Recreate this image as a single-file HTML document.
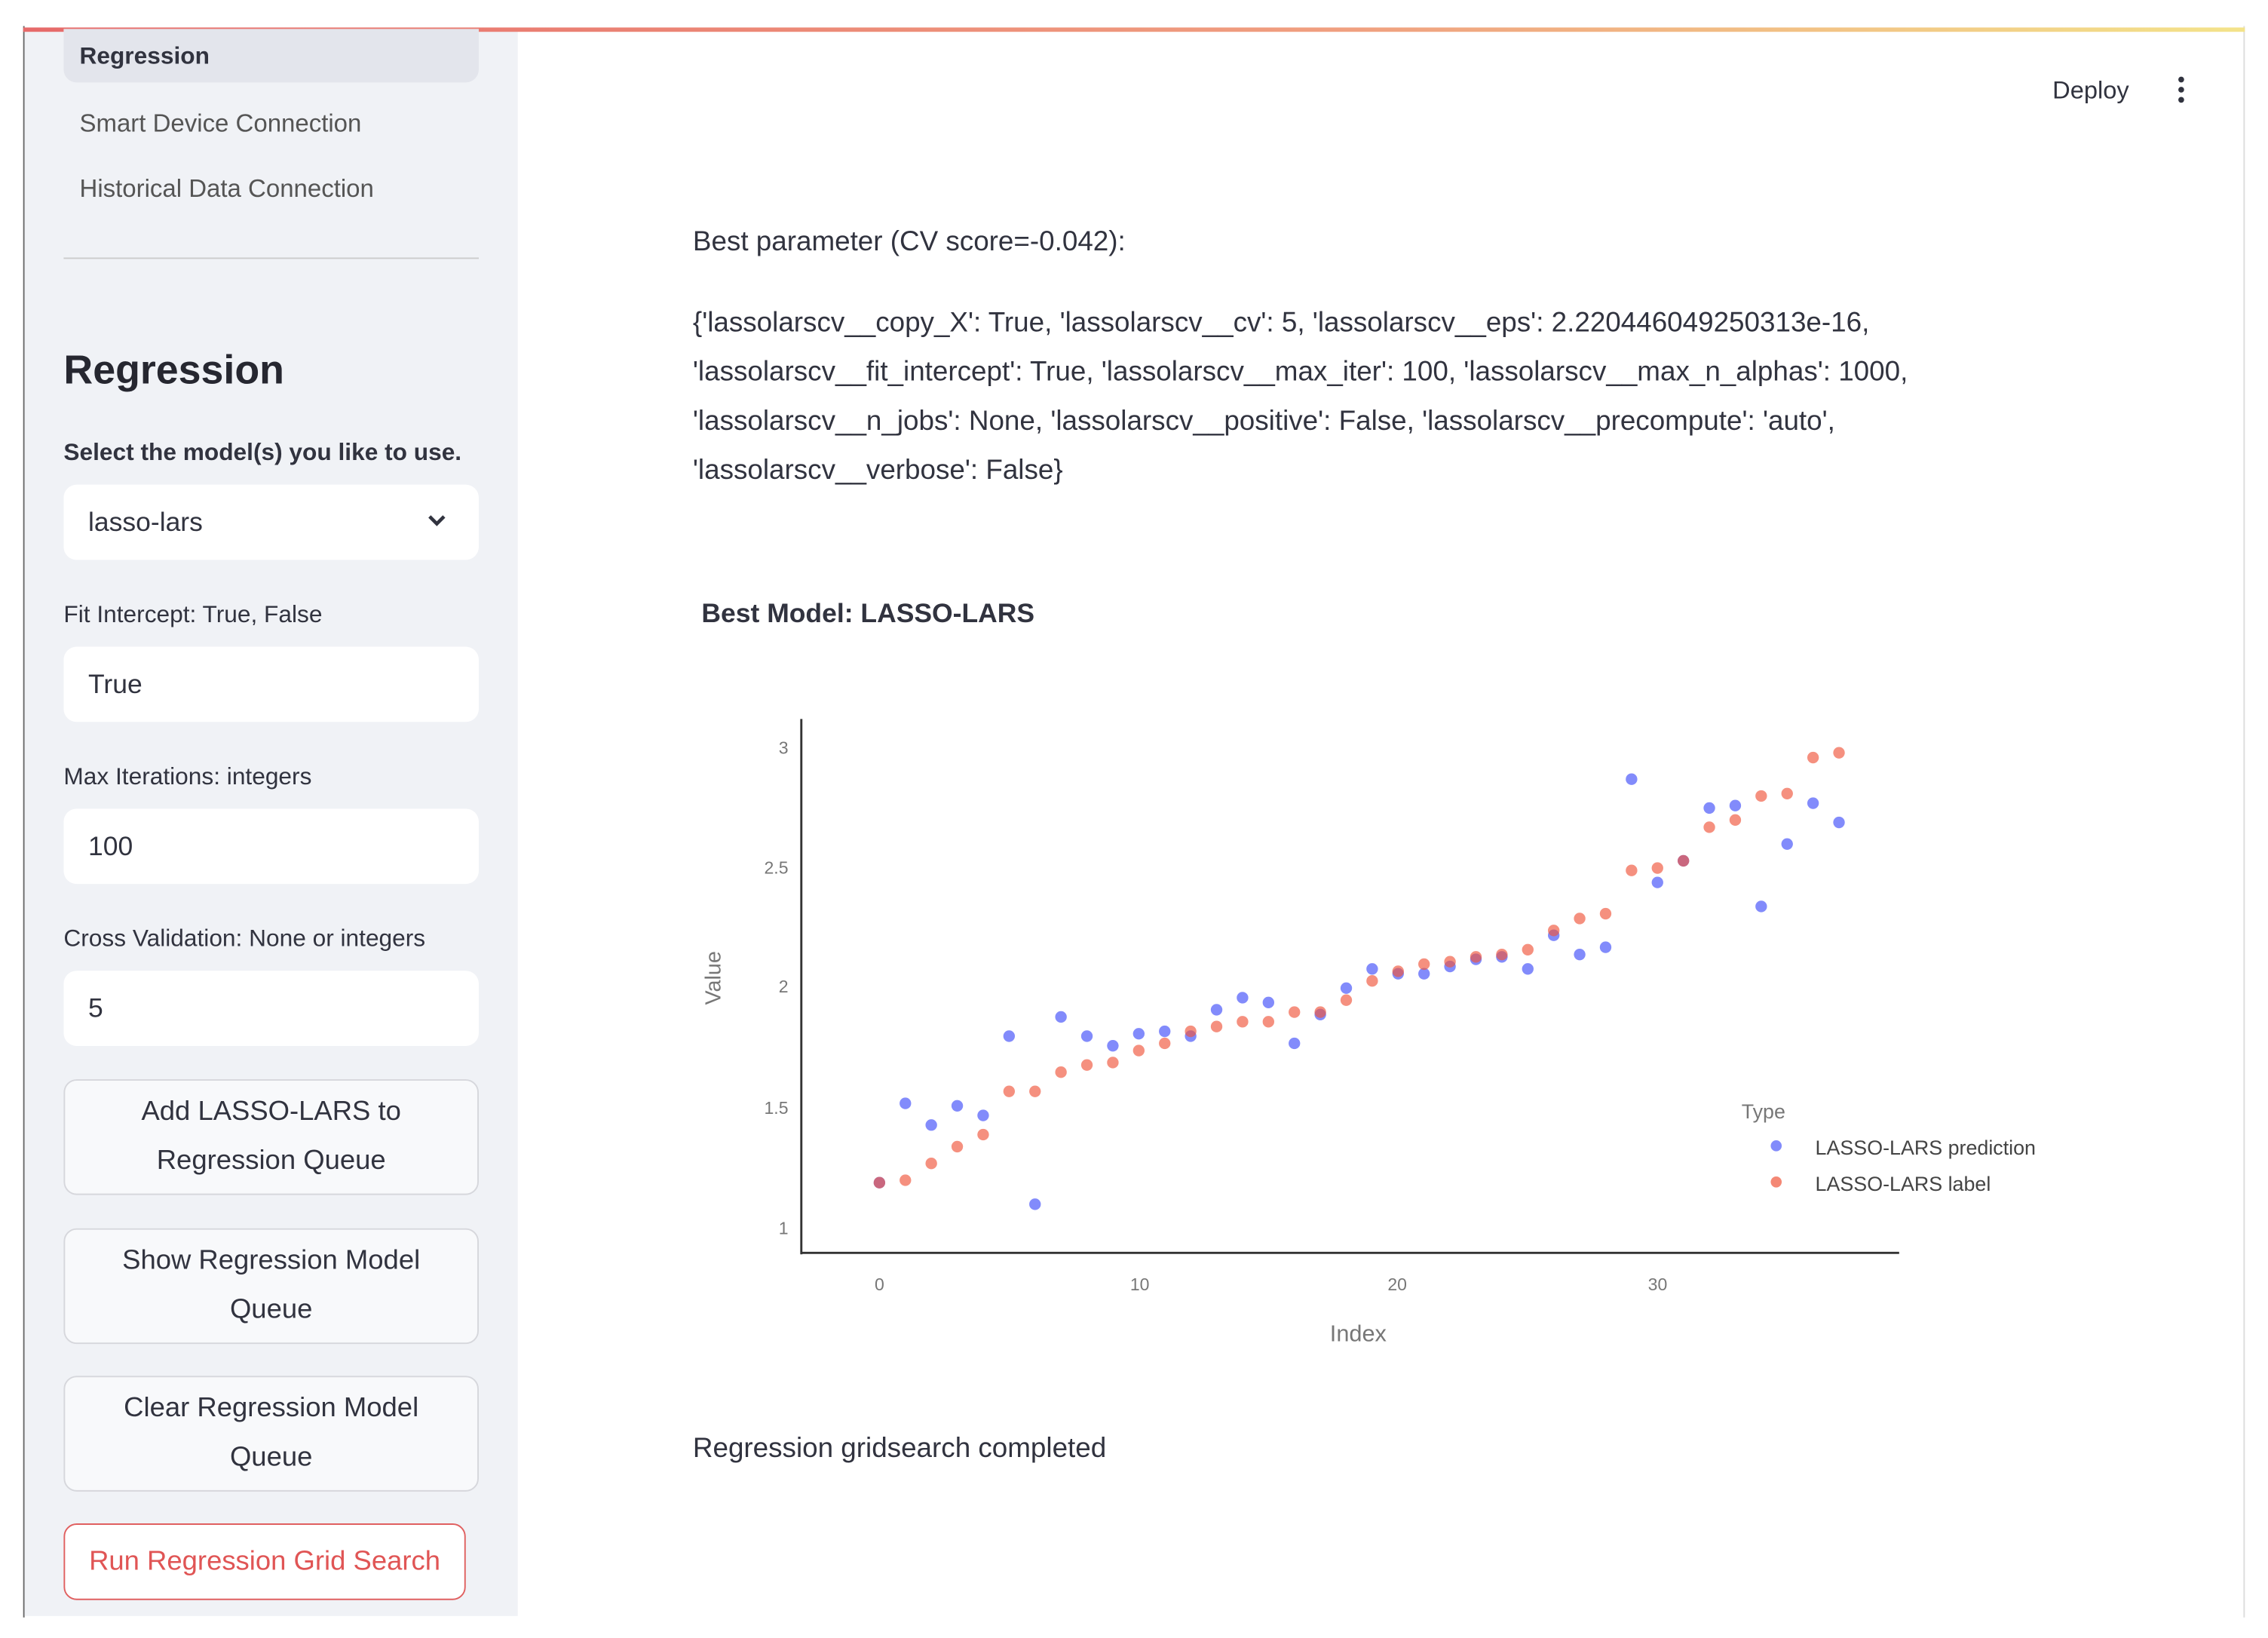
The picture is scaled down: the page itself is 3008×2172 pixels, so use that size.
<!DOCTYPE html>
<html><head><meta charset="utf-8">
<style>
html,body{margin:0;padding:0;background:#fff;overflow:hidden;width:3008px;height:2171px}
#w{position:absolute;left:0;top:0;width:1568px;height:1132px;transform:scale(1.91837);transform-origin:0 0;font-family:"Liberation Sans",sans-serif;color:#31333f}
.a{position:absolute;white-space:nowrap}
.sb{position:absolute;left:17px;top:20px;width:341px;height:1097px;background:#f0f2f6}
.inp{position:absolute;left:44px;width:287px;height:52px;background:#fff;border-radius:9px}
.inp span{position:absolute;left:17px;top:15px;font-size:18.5px;color:#31333f}
.lab{position:absolute;left:44px;font-size:16.5px;color:#31333f}
.btn{position:absolute;left:44px;width:287px;height:80px;border:1px solid #d6d7dc;border-radius:9px;background:#f8f9fb;text-align:center;font-size:19px;line-height:34px;padding-top:5px;box-sizing:border-box;color:#31333f}
.m{font-size:19.2px;color:#31333f;position:absolute;left:479px;white-space:nowrap}
</style></head><body><div id="w">
<div class="a" style="left:16px;top:18px;width:1px;height:1100px;background:#666"></div>
<div class="a" style="left:1551px;top:18px;width:1px;height:1100px;background:#ddd"></div>
<div class="sb"></div>
<div class="a" style="left:16px;top:19px;width:1536px;height:3px;background:linear-gradient(90deg,#e66a6a,#f0a080 60%,#f3e38a)"></div>
<div class="a" style="left:44px;top:20px;width:287px;height:37px;background:#e3e5ec;border-radius:0 0 9px 9px"></div>
<div class="a" style="left:55px;top:30px;font-size:16.5px;font-weight:bold;color:#31333f">Regression</div>
<div class="a" style="left:55px;top:75px;font-size:17.2px;color:#555">Smart Device Connection</div>
<div class="a" style="left:55px;top:120px;font-size:17.2px;color:#555">Historical Data Connection</div>
<div class="a" style="left:44px;top:178px;width:287px;height:1px;background:#ccc"></div>
<div class="a" style="left:44px;top:240px;font-size:28px;font-weight:bold;color:#262730">Regression</div>
<div class="lab" style="top:304px;font-weight:bold">Select the model(s) you like to use.</div>
<div class="inp" style="top:335px"><span>lasso-lars</span>
<svg style="position:absolute;left:251px;top:20px" width="14" height="10" viewBox="0 0 14 10"><path d="M2 2 L7 7 L12 2" stroke="#31333f" stroke-width="2.4" fill="none"/></svg></div>
<div class="lab" style="top:416px">Fit Intercept: True, False</div>
<div class="inp" style="top:447px"><span>True</span></div>
<div class="lab" style="top:528px">Max Iterations: integers</div>
<div class="inp" style="top:559px"><span>100</span></div>
<div class="lab" style="top:640px">Cross Validation: None or integers</div>
<div class="inp" style="top:671px"><span>5</span></div>
<div class="btn" style="top:746px">Add LASSO-LARS to<br>Regression Queue</div>
<div class="btn" style="top:849px">Show Regression Model<br>Queue</div>
<div class="btn" style="top:951px">Clear Regression Model<br>Queue</div>
<div class="btn" style="top:1053px;width:278px;height:53px;border-color:#e06060;background:#fff;color:#e05555;line-height:52px;padding-top:0">Run Regression Grid Search</div>

<div class="a" style="left:1419px;top:53px;font-size:17px">Deploy</div>
<svg class="a" style="left:1503px;top:52px" width="10" height="20"><circle cx="5" cy="3" r="2" fill="#31333f"/><circle cx="5" cy="10" r="2" fill="#31333f"/><circle cx="5" cy="17" r="2" fill="#31333f"/></svg>

<div class="m" style="top:157px">Best parameter (CV score=-0.042):</div>
<div class="m" style="top:213px">{'lassolarscv__copy_X': True, 'lassolarscv__cv': 5, 'lassolarscv__eps': 2.220446049250313e-16,</div>
<div class="m" style="top:247px">'lassolarscv__fit_intercept': True, 'lassolarscv__max_iter': 100, 'lassolarscv__max_n_alphas': 1000,</div>
<div class="m" style="top:281px">'lassolarscv__n_jobs': None, 'lassolarscv__positive': False, 'lassolarscv__precompute': 'auto',</div>
<div class="m" style="top:315px">'lassolarscv__verbose': False}</div>
<div class="a" style="left:485px;top:413px;font-size:18.5px;font-weight:bold">Best Model: LASSO-LARS</div>
<div class="m" style="top:991px">Regression gridsearch completed</div>

<svg class="a" style="left:0;top:0" width="1568" height="1132" id="p" font-family="Liberation Sans,sans-serif">
<line x1="554" y1="497" x2="554" y2="867" stroke="#333" stroke-width="1.5"/>
<line x1="554" y1="866" x2="1313" y2="866" stroke="#333" stroke-width="1.5"/>
<g font-size="12" fill="#777" text-anchor="end">
<text x="545" y="521">3</text><text x="545" y="604">2.5</text><text x="545" y="686">2</text><text x="545" y="770">1.5</text><text x="545" y="853">1</text></g>
<g font-size="12" fill="#777" text-anchor="middle">
<text x="608" y="892">0</text><text x="788" y="892">10</text><text x="966" y="892">20</text><text x="1146" y="892">30</text></g>
<text x="939" y="927" font-size="16" fill="#777" text-anchor="middle">Index</text>
<text transform="translate(498,676) rotate(-90)" font-size="15" fill="#777" text-anchor="middle">Value</text>
<text x="1204" y="773" font-size="14" fill="#777">Type</text>
<circle cx="1228" cy="792" r="3.8" fill="#636efa" opacity=".8"/>
<text x="1255" y="798" font-size="14" fill="#444">LASSO-LARS prediction</text>
<circle cx="1228" cy="817" r="3.8" fill="#ef553b" opacity=".7"/>
<text x="1255" y="823" font-size="14" fill="#444">LASSO-LARS label</text>
<g id="pts"></g>
</svg>
</div>
<script>
var d=[[1.19,1.19],[1.52,1.20],[1.43,1.27],[1.51,1.34],[1.47,1.39],[1.80,1.57],[1.10,1.57],[1.88,1.65],[1.80,1.68],[1.76,1.69],[1.81,1.74],[1.82,1.77],[1.80,1.82],[1.91,1.84],[1.96,1.86],[1.94,1.86],[1.77,1.90],[1.89,1.90],[2.00,1.95],[2.08,2.03],[2.06,2.07],[2.06,2.10],[2.09,2.11],[2.12,2.13],[2.13,2.14],[2.08,2.16],[2.22,2.24],[2.14,2.29],[2.17,2.31],[2.87,2.49],[2.44,2.50],[2.53,2.53],[2.75,2.67],[2.76,2.70],[2.34,2.80],[2.60,2.81],[2.77,2.96],[2.69,2.98]];
var s='';
d.forEach(function(v,i){var x=608+i*17.93;
s+='<circle cx="'+x+'" cy="'+(849-(v[0]-1)*166)+'" r="4" fill="#636efa" opacity="0.8"/>';
s+='<circle cx="'+x+'" cy="'+(849-(v[1]-1)*166)+'" r="4" fill="#ef553b" opacity="0.65"/>';});
document.getElementById('pts').innerHTML=s;
</script>
</body></html>
